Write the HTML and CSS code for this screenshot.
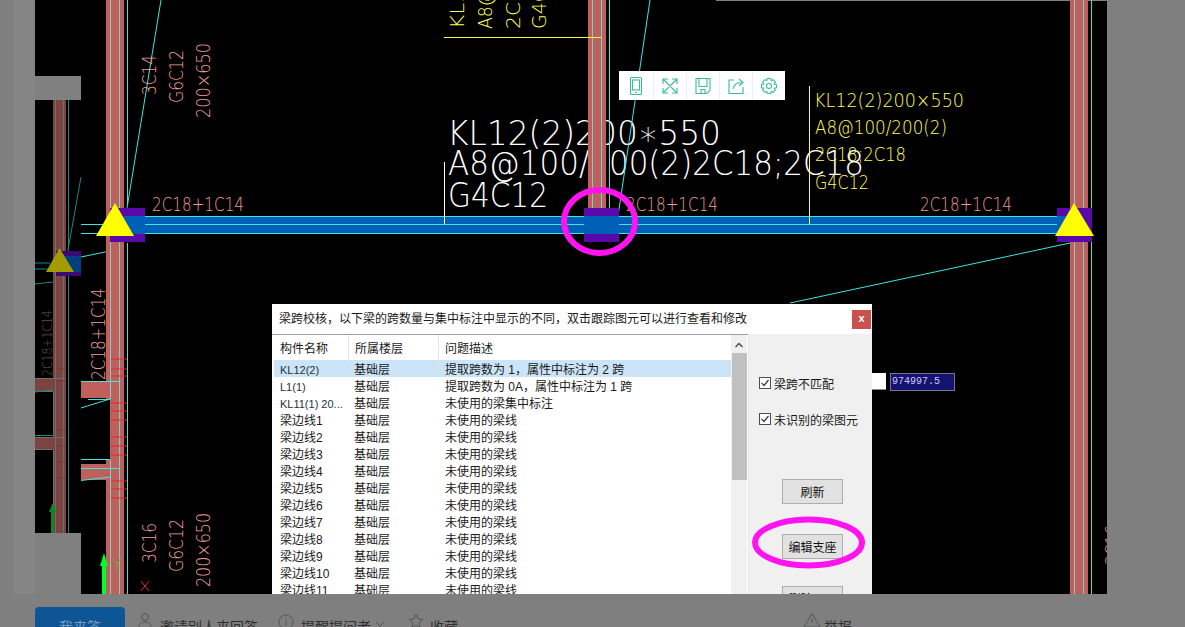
FILE: index.html
```html
<!DOCTYPE html>
<html lang="zh">
<head>
<meta charset="utf-8">
<title>梁跨校核</title>
<link rel="stylesheet" href="styles.css">
</head>
<body>
<main class="stage">
  <svg class="cad" viewBox="35 0 1072 594" width="1072" height="594" aria-label="CAD drawing">
    <rect class="bg" x="35" y="0" width="1072" height="594"/>
    <rect class="edge" x="716" y="0" width="391" height="1"/>

    <!-- drawing text that lies under the columns -->
    <text class="big" x="447" y="145" textLength="274" lengthAdjust="spacingAndGlyphs">KL12(2)200∗550</text>
    <text class="big" x="448" y="175" textLength="416" lengthAdjust="spacingAndGlyphs">A8@100/200(2)2C18;2C18</text>
    <text class="big" x="448" y="207" textLength="100" lengthAdjust="spacingAndGlyphs">G4C12</text>

    <!-- dim left sheet -->
    <g class="dim">
      <rect class="dim-red" x="53" y="100" width="13" height="433"/>
      <rect class="dim-red" x="35" y="378" width="31" height="13"/>
      <rect class="dim-red" x="35" y="437" width="31" height="12"/>
      <path class="dim-gr" d="M55.500 100V533M63.500 100V533M35 378.500H65M35 391.500H53M35 437.500H65M35 449.500H53M53.500 392V435M53.500 450V533"/>
      <path class="dim-cy" d="M68.500 100V533M35 392L53 390M35 435.500H53M35 263H50M35 269H50M35 284L53 282M81 177L68 250"/>
      <path class="dim-tick" d="M57 369H66M57 381H66M57 430H66M57 446H66M57 462H66M57 478H66"/>
      <rect class="dim-purple" x="56" y="251" width="25" height="25"/>
      <rect class="dim-blue" x="62" y="256" width="19" height="16"/>
      <polygon class="dim-yellow" points="59.500,248 46,272 74,272"/>
      <rect class="dim-green" x="51" y="508" width="3" height="25"/>
      <polygon class="dim-green" points="52.500,503 49,512 56,512"/>
      <text class="dim-text rot" transform="translate(52 376) rotate(-90)" textLength="66" lengthAdjust="spacingAndGlyphs">2C18+1C14</text>
    </g>
    <rect class="sheet" x="35" y="76" width="46" height="24"/>
    <rect class="sheet" x="35" y="533" width="46" height="61"/>

    <!-- beam -->
    <rect class="blue" x="124" y="216" width="940" height="18"/>

    <!-- diagonal leaders -->
    <path class="cy" d="M161 0L127 208M650 0L618 216M1070 243L790 303M81 257L110 251M81 224.500H110M81 233.500H110"/>

    <!-- columns -->
    <rect class="red" x="106" y="0" width="18" height="594"/>
    <rect class="bg" x="81" y="399" width="29" height="61"/>
    <rect class="red" x="81" y="381" width="37" height="17"/>
    <rect class="red" x="81" y="464" width="37" height="16"/>
    <rect class="bg" x="81" y="480" width="25" height="114"/>
    <rect class="red" x="588" y="0" width="18" height="210"/>
    <rect class="red" x="1070" y="0" width="18" height="594"/>
    <path class="cy-in" d="M110.500 0V399M110.500 460V594M119.500 0V594M592.500 0V210M601.500 0V210M1074.500 0V594M1083.500 0V594"/>
    <path class="cy" d="M127.500 0V205M127.500 243V594M81 381.500H119M81 408L110 399M110 399.500H88M81 459.500H110M81 468.500H119M81 480.500L110 477M609.500 0V208M1091.500 0V594"/>
    <path class="tick" d="M111 359H127M111 369H127M111 376H127M111 403H127M111 411H127M111 420H127M111 437H127M111 446H127M111 455H127M111 481H127M111 489H127M111 498H127"/>

    <!-- supports -->
    <rect class="purple" x="110" y="208" width="35" height="34"/>
    <rect class="purple" x="584" y="208" width="35" height="34"/>
    <rect class="purple" x="1057" y="208" width="35" height="34"/>
    <rect class="blue" x="124" y="216" width="21" height="18"/>
    <rect class="blue" x="584" y="216" width="35" height="18"/>
    <rect class="blue" x="1057" y="216" width="13" height="18"/>
    <path class="cy" d="M145 216.500H584M619 216.500H1057M145 224.500H584M619 224.500H1057M145 233.500H584M619 233.500H1057"/>

    <!-- yellow callouts -->
    <path class="yl" d="M444 37.500H601M809.500 86V224"/>
    <path class="wh" d="M444.500 162V224"/>
    <text class="ytext rot" transform="translate(464 29) rotate(-90)" textLength="40" lengthAdjust="spacingAndGlyphs">KL5</text>
    <text class="ytext rot" transform="translate(492 29) rotate(-90)" textLength="40" lengthAdjust="spacingAndGlyphs">A8@</text>
    <text class="ytext rot" transform="translate(520 29) rotate(-90)" textLength="40" lengthAdjust="spacingAndGlyphs">2C1</text>
    <text class="ytext rot" transform="translate(546 29) rotate(-90)" textLength="40" lengthAdjust="spacingAndGlyphs">G4C</text>
    <text class="ytext" x="814" y="107" textLength="150" lengthAdjust="spacingAndGlyphs">KL12(2)200×550</text>
    <text class="ytext" x="815" y="134" textLength="132" lengthAdjust="spacingAndGlyphs">A8@100/200(2)</text>
    <text class="ytext" x="815" y="161" textLength="91" lengthAdjust="spacingAndGlyphs">2C18;2C18</text>
    <text class="ytext" x="815" y="189" textLength="54" lengthAdjust="spacingAndGlyphs">G4C12</text>

    <!-- salmon annotations -->
    <text class="stext" x="152" y="211" textLength="92" lengthAdjust="spacingAndGlyphs">2C18+1C14</text>
    <text class="stext" x="626" y="211" textLength="92" lengthAdjust="spacingAndGlyphs">2C18+1C14</text>
    <text class="stext" x="920" y="211" textLength="92" lengthAdjust="spacingAndGlyphs">2C18+1C14</text>
    <text class="stext rot" transform="translate(156 95) rotate(-90)" textLength="40" lengthAdjust="spacingAndGlyphs">3C14</text>
    <text class="stext rot" transform="translate(183 103) rotate(-90)" textLength="53" lengthAdjust="spacingAndGlyphs">G6C12</text>
    <text class="stext rot" transform="translate(210 118) rotate(-90)" textLength="75" lengthAdjust="spacingAndGlyphs">200×650</text>
    <text class="stext rot" transform="translate(156 563) rotate(-90)" textLength="40" lengthAdjust="spacingAndGlyphs">3C16</text>
    <text class="stext rot" transform="translate(183 572) rotate(-90)" textLength="53" lengthAdjust="spacingAndGlyphs">G6C12</text>
    <text class="stext rot" transform="translate(210 587) rotate(-90)" textLength="74" lengthAdjust="spacingAndGlyphs">200×650</text>
    <text class="stext rot" transform="translate(105 380) rotate(-90)" textLength="92" lengthAdjust="spacingAndGlyphs">2C18+1C14</text>
    <text class="stext rot" transform="translate(1119 565) rotate(-90)" textLength="40" lengthAdjust="spacingAndGlyphs">3C16</text>

    <path class="xmark" d="M141 581L149 591M149 581L141 591"/>
    <path class="ydim" d="M113 558L117 564L121 558M117 564V570"/>
    <rect class="green" x="102" y="560" width="4" height="34"/>
    <polygon class="green" points="104,553 100,566 108,566"/>

    <polygon class="yellow" points="115,203 96,236 134,236"/>
    <polygon class="yellow" points="1074,203 1055,236 1094,236"/>
  </svg>

  <div class="tools">
    <span class="tool"><svg viewBox="0 0 20 20" width="20" height="20"><rect x="4.500" y="1.500" width="11" height="17" rx="1"/><rect x="6.500" y="4" width="7" height="10"/><path d="M9 16.500H11"/></svg></span>
    <span class="tool"><svg viewBox="0 0 20 20" width="20" height="20"><path d="M3 3L17 17M17 3L3 17M3 8V3H8M12 3H17V8M3 12V17H8M12 17H17V12"/></svg></span>
    <span class="tool"><svg viewBox="0 0 20 20" width="20" height="20"><path d="M3 2.500H17V14L14 17.500H3Z"/><path d="M6 2.500V10.500H14V2.500M8 17.500V13.500H12V17.500"/></svg></span>
    <span class="tool"><svg viewBox="0 0 20 20" width="20" height="20"><path d="M8 4H3V17.500H17V11"/><path d="M7 13C8 8.500 11 6.500 15.500 6.500M13 3L17 6.500L13 10"/></svg></span>
    <span class="tool"><svg viewBox="0 0 20 20" width="20" height="20"><path d="M8.200 2.500H11.800L12.300 4.700L14.300 3.700L16.600 6.300L15.200 8L17.500 8.800V11.800L15.200 12.200L16.300 14.300L14 16.500L12.200 15.300L11.700 17.500H8.300L7.800 15.300L5.900 16.400L3.600 14L4.800 12.200L2.500 11.700V8.500L4.800 8L3.700 6L6 3.600L7.800 4.700Z"/><circle cx="10" cy="10" r="2.500"/></svg></span>
  </div>

  <section class="dialog">
    <header class="dialog-title">
      <span class="title-text">梁跨校核，以下梁的跨数量与集中标注中显示的不同，双击跟踪图元可以进行查看和修改</span>
      <span class="close">x</span>
    </header>
    <div class="dialog-body">
      <div class="list">
        <div class="rows">
          <div class="row head"><span>构件名称</span><span>所属楼层</span><span>问题描述</span></div>
          <div class="row selected"><span class="latin">KL12(2)</span><span>基础层</span><span>提取跨数为 1，属性中标注为 2 跨</span></div>
          <div class="row"><span class="latin">L1(1)</span><span>基础层</span><span>提取跨数为 0A，属性中标注为 1 跨</span></div>
          <div class="row"><span class="latin">KL11(1) 20...</span><span>基础层</span><span>未使用的梁集中标注</span></div>
          <div class="row"><span>梁边线1</span><span>基础层</span><span>未使用的梁线</span></div>
          <div class="row"><span>梁边线2</span><span>基础层</span><span>未使用的梁线</span></div>
          <div class="row"><span>梁边线3</span><span>基础层</span><span>未使用的梁线</span></div>
          <div class="row"><span>梁边线4</span><span>基础层</span><span>未使用的梁线</span></div>
          <div class="row"><span>梁边线5</span><span>基础层</span><span>未使用的梁线</span></div>
          <div class="row"><span>梁边线6</span><span>基础层</span><span>未使用的梁线</span></div>
          <div class="row"><span>梁边线7</span><span>基础层</span><span>未使用的梁线</span></div>
          <div class="row"><span>梁边线8</span><span>基础层</span><span>未使用的梁线</span></div>
          <div class="row"><span>梁边线9</span><span>基础层</span><span>未使用的梁线</span></div>
          <div class="row"><span>梁边线10</span><span>基础层</span><span>未使用的梁线</span></div>
          <div class="row"><span>梁边线11</span><span>基础层</span><span>未使用的梁线</span></div>
        </div>
        <div class="scrollbar">
          <svg class="arrow" viewBox="0 0 10 6" width="10" height="6"><path d="M1.500 5L5 1.500L8.500 5"/></svg>
          <div class="thumb"></div>
        </div>
      </div>
      <div class="side">
        <label class="check"><span class="box"><svg viewBox="0 0 12 12" width="12" height="12"><path d="M2.500 6L5 8.500L9.500 3"/></svg></span>梁跨不匹配</label>
        <label class="check second"><span class="box"><svg viewBox="0 0 12 12" width="12" height="12"><path d="M2.500 6L5 8.500L9.500 3"/></svg></span>未识别的梁图元</label>
        <button class="btn first">刷新</button>
        <button class="btn">编辑支座</button>
        <button class="btn last">删除图元</button>
      </div>
    </div>
  </section>

  <div class="coord">
    <span class="coord-white"></span>
    <span class="coord-value">974997.5</span>
  </div>

  <svg class="markup" viewBox="0 0 1185 594" width="1185" height="594" aria-hidden="true">
    <ellipse class="mark" cx="599.500" cy="221.500" rx="35.500" ry="31.500"/>
    <ellipse class="mark" cx="808.500" cy="542.500" rx="53.500" ry="23"/>
  </svg>
</main>

<footer class="actions">
  <a class="answer">我来答</a>
  <span class="act invite"><svg viewBox="0 0 14 16" width="14" height="16"><circle cx="7" cy="5" r="3.500"/><path d="M1 15C1 11 4 10 7 10S13 11 13 15"/></svg>邀请别人来回答</span>
  <span class="act remind"><svg viewBox="0 0 16 16" width="16" height="16"><circle cx="8" cy="8" r="7"/><path d="M8 7V12M8 4V5.500"/></svg>提醒提问者<svg class="chev" viewBox="0 0 10 6" width="10" height="6"><path d="M1 1L5 5L9 1"/></svg></span>
  <span class="act fav"><svg viewBox="0 0 16 16" width="16" height="16"><path d="M8 1.500L10 6L15 6.500L11.200 9.700L12.300 14.500L8 12L3.700 14.500L4.800 9.700L1 6.500L6 6Z"/></svg>收藏</span>
  <span class="act report"><svg viewBox="0 0 18 16" width="18" height="16"><path d="M9 1.500L17 15H1ZM9 6V11"/></svg>举报</span>
</footer>
</body>
</html>
```
FILE: styles.css
```css
html, body {
  margin: 0;
  padding: 0;
  height: 100%;
  overflow: hidden;
  background: #7e7f7e;
  font-family: "Liberation Sans", "Noto Sans CJK SC", sans-serif;
}

.stage {
  position: relative;
  width: 1185px;
  height: 594px;
  overflow: hidden;
  background: linear-gradient(90deg, #7e7f7e 14px, #848584 14px, #848584 35px, #7e7f7e 35px);
}

.cad {
  display: block;
  margin-left: 35px;
}

.bg { fill: #000; }
.edge { fill: #7e7f7e; }
.sheet { fill: #808080; }
.red { fill: #c0605c; }
.blue { fill: #0060b8; }
.purple { fill: #5a08aa; }
.yellow { fill: #ffff00; }
.green { fill: #00ff2a; }
.cy, .cy-in, .yl, .wh, .tick, .xmark, .ydim { fill: none; stroke-width: 1; }
.cy { stroke: #3fe6e0; }
.cy-in { stroke: #74d2cc; }
.yl { stroke: #ffff40; }
.wh { stroke: #fff; }
.tick { stroke: #e8242a; }
.xmark { stroke: #e8282a; }
.ydim { stroke: #7da838; }

.big, .ytext, .stext, .dim-text {
  font-family: "DejaVu Sans", "Liberation Sans", sans-serif;
  font-weight: 200;
}
.big { fill: #fff; font-size: 33px; }
.ytext { fill: #ffff5a; font-size: 20px; }
.stext { fill: #ec9c94; font-size: 20px; }
.dim-text { fill: #6a4c4a; font-size: 14px; }

.dim-red { fill: #7b4341; }
.dim-gr { fill: none; stroke: #6f6f6c; stroke-width: 1; }
.dim-cy { fill: none; stroke: #1f8680; stroke-width: 1; }
.dim-tick { fill: none; stroke: #8a3030; stroke-width: 1; }
.dim-purple { fill: #3a0a78; }
.dim-blue { fill: #004080; }
.dim-yellow { fill: #a39c00; }
.dim-green { fill: #0f8a20; }

/* hand-drawn markup above everything in the picture */
.markup {
  position: absolute;
  left: 0;
  top: 0;
  pointer-events: none;
}
.mark { fill: none; stroke: #ff14f0; stroke-width: 6; }

/* floating toolbar */
.tools {
  position: absolute;
  left: 619px;
  top: 71px;
  display: flex;
  height: 29px;
  background: #fff;
}
.tool {
  display: flex;
  align-items: center;
  justify-content: center;
  width: 33px;
  border-left: 1px solid #eeeeee;
  box-sizing: border-box;
}
.tool:first-child { border-left: 0; width: 34px; }
.tool svg { fill: none; stroke: #3dbb94; stroke-width: 1.100; }

/* dialog window */
.dialog {
  position: absolute;
  left: 272px;
  top: 304px;
  width: 600px;
  height: 330px;
  background: #f0f0f0;
  display: flex;
  flex-direction: column;
  font-size: 12px;
  color: #1a1a1a;
}
.dialog-title {
  display: flex;
  align-items: center;
  justify-content: space-between;
  box-sizing: border-box;
  height: 30px;
  padding: 0 1px 0 7px;
  background: #fff;
}
.title-text { margin-top: -3px; }
.close {
  width: 19px;
  height: 19px;
  line-height: 17px;
  text-align: center;
  background: #c8504f;
  color: #fff;
  font-weight: 700;
  font-size: 11px;
}
.dialog-body {
  display: flex;
  flex: 1;
  min-height: 0;
}
.list {
  display: flex;
  width: 476px;
  background: #fff;
  border-top: 1px solid #a0a0a0;
}
.rows {
  width: 459px;
  padding-left: 2px;
  box-sizing: border-box;
}
.row {
  display: grid;
  grid-template-columns: 74px 90px 1fr;
  height: 17px;
  line-height: 20px;
  white-space: nowrap;
}
.row span { padding-left: 6px; }
.row span:nth-child(3) { padding-left: 7px; }
.row.head {
  height: 25px;
  line-height: 29px;
}
.row.head span + span { border-left: 1px solid #e5e5e5; }
.row.head span:nth-child(3) { padding-left: 6px; }
.row.selected { background: #cce4f7; }
.latin { font-size: 11px; color: #27323a; }

.scrollbar {
  width: 16px;
  background: #f0f0f0;
  display: flex;
  flex-direction: column;
  align-items: center;
}
.arrow {
  margin: 7px 0 5px;
  fill: none;
  stroke: #505050;
  stroke-width: 1.500;
}
.thumb {
  width: 15px;
  height: 127px;
  background: #c0c0c0;
}

.side {
  display: flex;
  flex-direction: column;
  align-items: flex-start;
  flex: 1;
  padding: 42px 0 0 10px;
  border-left: 1px solid #e8e8e8;
}
.check {
  display: flex;
  align-items: center;
  gap: 3px;
  height: 14px;
  white-space: nowrap;
}
.check.second { margin-top: 22px; }
.box {
  width: 12px;
  height: 12px;
  border: 1px solid #4d4d4d;
  background: #fff;
  box-sizing: border-box;
  display: flex;
}
.box svg {
  margin: -1px;
  flex: none;
  fill: none;
  stroke: #3a3a3a;
  stroke-width: 1.200;
}
.btn {
  align-self: flex-start;
  margin: 30px 0 0 23px;
  padding: 0;
  width: 61px;
  height: 25px;
  background: #e1e1e1;
  border: 1px solid #adadad;
  font: inherit;
  color: #111;
  flex: none;
}
.btn.first { margin-top: 53px; }
.btn.last { margin-top: 27px; }

/* status values on the drawing */
.coord {
  position: absolute;
  left: 872px;
  top: 373px;
  display: flex;
  gap: 4px;
}
.coord-white {
  width: 14px;
  height: 17px;
  background: #fff;
  border-bottom: 1px solid #888;
  box-sizing: border-box;
}
.coord-value {
  box-sizing: border-box;
  width: 65px;
  height: 18px;
  padding-left: 1px;
  line-height: 16px;
  background: #14146e;
  border: 1px solid #77778c;
  color: #c8c8ff;
  font-family: "Liberation Mono", monospace;
  font-size: 10px;
}

/* dimmed page actions */
.actions {
  display: flex;
  height: 33px;
  overflow: hidden;
  box-sizing: border-box;
  padding: 13px 0 0 35px;
  color: #2f3030;
  font-size: 14px;
}
.answer {
  flex: none;
  width: 90px;
  height: 36px;
  padding-top: 9px;
  box-sizing: border-box;
  border-radius: 4px;
  background: #0e5596;
  color: #7b9cbc;
  text-align: center;
}
.act {
  display: flex;
  align-items: flex-start;
  padding-top: 9px;
  white-space: nowrap;
}
.act svg {
  fill: none;
  stroke: #555757;
  stroke-width: 1;
  flex: none;
}
.invite { margin-left: 13px; gap: 8px; }
.invite svg { margin-top: -4px; }
.remind { margin-left: 20px; gap: 7px; }
.remind svg { margin-top: -2px; }
.remind .chev { margin: 5px 0 0 -3px; }
.fav { margin-left: 23px; gap: 6px; }
.fav svg { margin-top: -3px; }
.report { margin-left: 345px; gap: 3px; }
.report svg { margin-top: -4px; }
```
